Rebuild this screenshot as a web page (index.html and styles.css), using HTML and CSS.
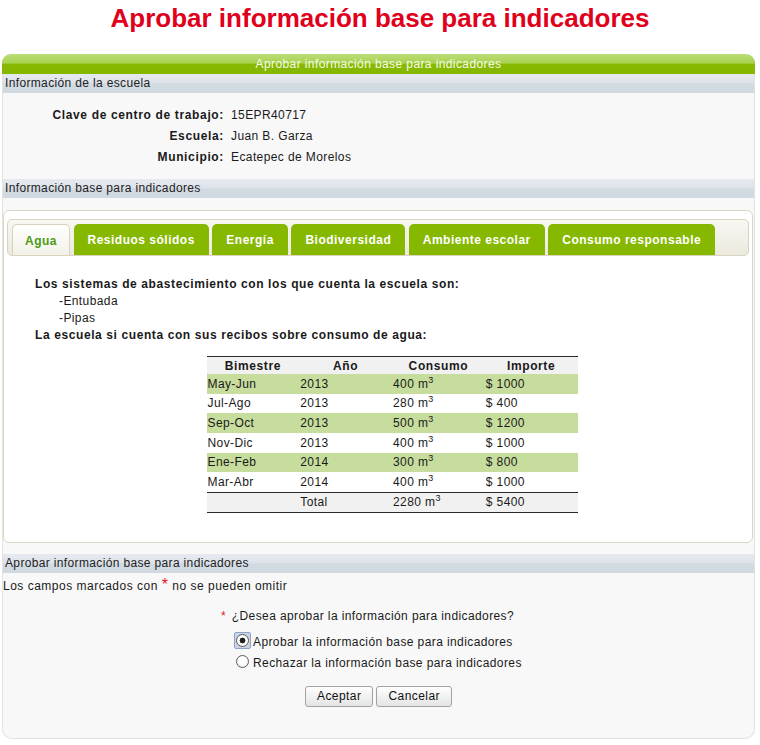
FILE: index.html
```html
<!DOCTYPE html>
<html lang="es">
<head>
<meta charset="utf-8">
<title>Aprobar información base para indicadores</title>
<link rel="stylesheet" href="styles.css">
</head>
<body>
<h1 class="page-title">Aprobar información base para indicadores</h1>
<div class="panel">
  <div class="panel-head">Aprobar información base para indicadores</div>
  <div class="sec-head">Información de la escuela</div>
  <div class="info">
    <div class="info-label">Clave de centro de trabajo:</div><div class="info-value">15EPR40717</div>
    <div class="info-label">Escuela:</div><div class="info-value">Juan B. Garza</div>
    <div class="info-label">Municipio:</div><div class="info-value">Ecatepec de Morelos</div>
  </div>
  <div class="sec-head">Información base para indicadores</div>
  <div class="tabs">
    <ul class="tab-nav">
      <li class="tab active">Agua</li>
      <li class="tab">Residuos sólidos</li>
      <li class="tab">Energía</li>
      <li class="tab">Biodiversidad</li>
      <li class="tab">Ambiente escolar</li>
      <li class="tab">Consumo responsable</li>
    </ul>
    <div class="tab-panel">
      <p class="line strong">Los sistemas de abastecimiento con los que cuenta la escuela son:</p>
      <p class="line item">-Entubada</p>
      <p class="line item">-Pipas</p>
      <p class="line strong">La escuela si cuenta con sus recibos sobre consumo de agua:</p>
      <table class="consumo">
        <thead>
          <tr><th>Bimestre</th><th>Año</th><th>Consumo</th><th>Importe</th></tr>
        </thead>
        <tbody>
          <tr class="alt"><td>May-Jun</td><td>2013</td><td>400 m<sup>3</sup></td><td>$ 1000</td></tr>
          <tr><td>Jul-Ago</td><td>2013</td><td>280 m<sup>3</sup></td><td>$ 400</td></tr>
          <tr class="alt"><td>Sep-Oct</td><td>2013</td><td>500 m<sup>3</sup></td><td>$ 1200</td></tr>
          <tr><td>Nov-Dic</td><td>2013</td><td>400 m<sup>3</sup></td><td>$ 1000</td></tr>
          <tr class="alt"><td>Ene-Feb</td><td>2014</td><td>300 m<sup>3</sup></td><td>$ 800</td></tr>
          <tr><td>Mar-Abr</td><td>2014</td><td>400 m<sup>3</sup></td><td>$ 1000</td></tr>
        </tbody>
        <tfoot>
          <tr><td></td><td>Total</td><td>2280 m<sup>3</sup></td><td>$ 5400</td></tr>
        </tfoot>
      </table>
    </div>
  </div>
  <div class="sec-head">Aprobar información base para indicadores</div>
  <div class="form">
    <p class="note">Los campos marcados con <span class="req big">*</span> no se pueden omitir</p>
    <div class="question">
      <div class="q-label"><span class="req">*</span> ¿Desea aprobar la información para indicadores?</div>
      <label class="opt"><span class="radio-wrap focus"><input type="radio" name="aprobar" class="radio" checked></span>Aprobar la información base para indicadores</label>
      <label class="opt"><span class="radio-wrap"><input type="radio" name="aprobar" class="radio"></span>Rechazar la información base para indicadores</label>
    </div>
    <div class="buttons">
      <button type="button" class="btn">Aceptar</button>
      <button type="button" class="btn">Cancelar</button>
    </div>
  </div>
</div>
</body>
</html>
```

FILE: styles.css
```css
html, body {
  background: #ffffff;
}

body {
  margin: 0;
  font-family: "Liberation Sans", Arial, sans-serif;
  font-size: 12px;
  letter-spacing: 0.4px;
  color: #1a1a1a;
}

.page-title {
  margin: 3px 0 21px;
  font-size: 26px;
  line-height: 30px;
  font-weight: bold;
  letter-spacing: 0;
  color: #e0001b;
  text-align: center;
}

.panel {
  margin: 0 5px 0 2px;
  border: 1px solid #e2e2e2;
  border-top: none;
  border-radius: 9px 9px 10px 10px;
  background: #f8f8f8;
}

.panel-head {
  margin: 0 -1px;
  height: 20px;
  line-height: 20px;
  text-align: center;
  color: #f5fae9;
  border-radius: 9px 9px 0 0;
  background: linear-gradient(#bddd7a 0%, #a8d24f 45%, #88b900 52%, #84b700 100%);
}

.sec-head {
  height: 19px;
  line-height: 19px;
  padding-left: 2px;
  letter-spacing: 0.35px;
  color: #222;
  background: linear-gradient(#e6eaf0 0%, #dee3ea 45%, #d2dae2 52%, #d0d8e0 100%);
}

.info {
  display: grid;
  grid-template-columns: 221px auto;
  column-gap: 7px;
  padding: 12px 0 11px;
  line-height: 21px;
}

.info-label {
  text-align: right;
  font-weight: bold;
  letter-spacing: 0.65px;
}

.tabs {
  margin: 12px 1px 11px 0;
  padding: 8px 3px 0;
  border: 1px solid #dcd6c4;
  border-radius: 6px;
  background: #ffffff;
}

.tab-nav {
  display: flex;
  gap: 3.5px;
  margin: 0;
  padding: 4px 4px 0;
  list-style: none;
  border: 1px solid #d9d3bf;
  border-radius: 5px;
  background: linear-gradient(#f8f7f2, #ece9de);
}

.tab {
  height: 31px;
  line-height: 32px;
  padding: 0 14px;
  font-weight: bold;
  letter-spacing: 0.5px;
  color: #ffffff;
  background: #86b800;
  border-radius: 5px 5px 0 0;
}

.tab.active {
  padding: 0 12px;
  height: 30px;
  color: #4a9c10;
  border: 1px solid #d8d1bb;
  border-bottom: none;
  background: linear-gradient(#ffffff, #f3f1e8);
}

.tab-panel {
  padding: 20px 0 29px 28px;
}

.line {
  margin: 0;
  line-height: 17px;
}

.strong {
  font-weight: bold;
  letter-spacing: 0.6px;
}

.item {
  padding-left: 24px;
}

.consumo {
  width: 371px;
  margin: 12px auto 0;
  border-collapse: collapse;
  table-layout: fixed;
  border-top: 1px solid #2a2a2a;
}

.consumo th {
  height: 17px;
  padding: 0;
  font-weight: bold;
  letter-spacing: 0.6px;
  text-align: center;
  background: #f1f1f1;
}

.consumo td {
  height: 19.67px;
  padding: 0 0 0 1px;
  text-align: left;
}

.consumo tbody tr.alt td {
  background: #c7dd9d;
}

.consumo tfoot tr {
  border-top: 1px solid #2a2a2a;
  border-bottom: 1px solid #2a2a2a;
}

.consumo tfoot td {
  height: 19px;
  background: #f1f1f1;
}

sup {
  font-size: 9px;
  line-height: 0;
}

.form {
  padding: 5px 0 31px;
}

.note {
  margin: 0;
  line-height: 17px;
  letter-spacing: 0.5px;
}

.req {
  color: #e3161c;
  margin-right: 2px;
}

.req.big {
  font-size: 16px;
  line-height: 0;
  margin-right: 0;
}

.question {
  margin: 13px 0 0 218px;
}

.q-label {
  line-height: 17px;
  margin-bottom: 7px;
}

.opt {
  display: flex;
  align-items: center;
  height: 21px;
  margin-left: 13px;
}

.radio-wrap {
  display: flex;
  align-items: center;
  justify-content: center;
  width: 17px;
  height: 17px;
  margin: -4px 2px 0 0;
  box-sizing: border-box;
  border-radius: 2px;
}

.radio-wrap.focus {
  border: 1px solid #8ea3c8;
  background: #c9d3e4;
}

.radio {
  appearance: none;
  -webkit-appearance: none;
  margin: 0;
  width: 13px;
  height: 13px;
  box-sizing: border-box;
  border: 1px solid #5c5c5c;
  border-radius: 50%;
  background: radial-gradient(circle at 50% 40%, #ffffff 40%, #e4e4e4 100%);
}

.radio:checked {
  background: radial-gradient(circle, #1e1e1e 0, #1e1e1e 2.6px, #ffffff 3.2px, #f4f4f4 100%);
}

.buttons {
  display: flex;
  justify-content: center;
  gap: 3px;
  margin-top: 12px;
}

.btn {
  height: 21px;
  padding: 0 11px;
  font-family: inherit;
  font-size: 12px;
  letter-spacing: 0.45px;
  color: #111;
  border: 1px solid #a2a2a2;
  border-radius: 3px;
  background: linear-gradient(#ffffff, #e4e4e4);
}
```
